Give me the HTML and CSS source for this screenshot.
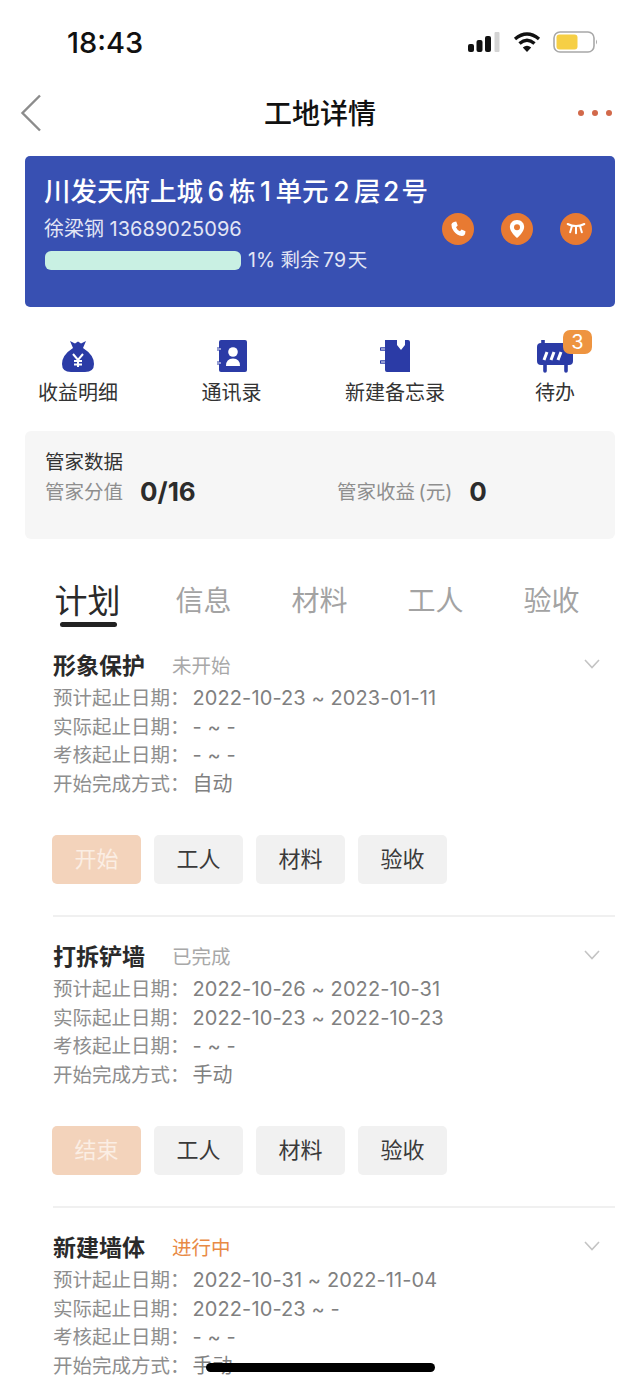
FILE: index.html
```html
<!DOCTYPE html>
<html lang="zh-CN">

<head>
    <meta charset="UTF-8">
    <meta name="viewport" content="width=device-width, initial-scale=1.0">
    <title>工地详情</title>
    <link rel="stylesheet" href="styles.css">
</head>

<body>
    <div class="phone">
        <!-- Status bar -->
        <div class="status-bar">
            <span class="time">18:43</span>
            <div class="status-icons">
                <svg width="33" height="20" viewBox="0 0 33 20">
                    <rect x="0" y="12" width="6" height="8" rx="2" fill="#111"/>
                    <rect x="8.5" y="8" width="6" height="12" rx="2" fill="#111"/>
                    <rect x="17" y="4" width="6" height="16" rx="2" fill="#111"/>
                    <rect x="26.5" y="0" width="5" height="20" rx="1" fill="#d4d4d4"/>
                </svg>
                <svg width="28" height="22" viewBox="0 0 28 22" fill="none" stroke="#111" stroke-width="3.4">
                    <path d="M2 8 Q14 -2 26 8"/>
                    <path d="M6.5 12.5 Q14 6 21.5 12.5"/>
                    <path d="M14 21 L9.8 16.5 Q14 13 18.2 16.5 Z" fill="#111" stroke="none"/>
                </svg>
                <svg width="46" height="22" viewBox="0 0 46 22">
                    <rect x="1" y="1" width="40" height="20" rx="6" fill="#fff" stroke="#a8a8a8" stroke-width="1.6"/>
                    <rect x="3.5" y="3.5" width="21" height="15" rx="3" fill="#f6cf45"/>
                    <path d="M43 8.5 Q45 11 43 13.5 Z" fill="#a8a8a8"/>
                </svg>
            </div>
        </div>

        <!-- Nav bar -->
        <div class="nav-bar">
            <svg class="back" width="22" height="38" viewBox="0 0 22 38" fill="none" stroke="#8c8c8c" stroke-width="2.4">
                <path d="M20 1.5 L2.5 19 L20 36.5"/>
            </svg>
            <h1 class="nav-title">工地详情</h1>
            <div class="more"><i></i><i></i><i></i></div>
        </div>

        <!-- Blue site card -->
        <div class="site-card">
            <h2 class="site-name">川发天府上城&thinsp;6&thinsp;栋&thinsp;1&thinsp;单元&thinsp;2&thinsp;层&hairsp;2&hairsp;号</h2>
            <div class="site-row">
                <div class="site-info">
                    <div class="site-owner">徐梁钢 13689025096</div>
                    <div class="site-progress">
                        <div class="bar"></div>
                        <span>1% 剩余&thinsp;79&hairsp;天</span>
                    </div>
                </div>
                <div class="site-actions">
                    <span class="round-btn">
                        <svg width="18" height="18" viewBox="0 0 24 24" fill="#fff"><path d="M6.6 2.5 L9.6 2 L11.6 7.4 L9.4 9.6 Q10.6 13 14.6 15 L16.8 12.8 L22 15 L21.4 18.6 Q20.4 21.4 17 21.2 Q10.4 20.4 6.4 15 Q3 10.2 3.2 6 Q3.6 3.2 6.6 2.5 Z"/></svg>
                    </span>
                    <span class="round-btn">
                        <svg width="18" height="20" viewBox="0 0 24 26"><path d="M12 1 C5.8 1 2.5 5.6 2.5 10.4 C2.5 16 8 21.4 12 25 C16 21.4 21.5 16 21.5 10.4 C21.5 5.6 18.2 1 12 1 Z" fill="#fff"/><circle cx="12" cy="10.5" r="4" fill="#e87a32"/></svg>
                    </span>
                    <span class="round-btn">
                        <svg width="20" height="16" viewBox="0 0 24 18" fill="none" stroke="#fff" stroke-width="2.4" stroke-linecap="round"><path d="M2 3 Q12 8 22 3"/><path d="M7 6 L5 13"/><path d="M12 7 L12 14"/><path d="M17 6 L19 13"/></svg>
                    </span>
                </div>
            </div>
        </div>

        <!-- Shortcuts -->
        <div class="shortcuts">
            <div class="shortcut">
                <svg width="32" height="36" viewBox="0 0 32 36">
                    <path d="M8 1 L13 3.5 L16 1.5 L19 3.5 L24 1 L21 8 Q32 15 32 24 Q32 32 23 32 L9 32 Q0 32 0 24 Q0 15 11 8 Z" fill="#2b3ba6"/>
                    <path d="M11 14 L16 20 L21 14 M16 20 L16 27 M12 21 L20 21 M12 24.5 L20 24.5" fill="none" stroke="#fff" stroke-width="2"/>
                </svg>
                <span>收益明细</span>
            </div>
            <div class="shortcut">
                <svg width="30" height="36" viewBox="0 0 30 36">
                    <rect x="2" y="0" width="28" height="32" rx="2" fill="#2b3ba6"/>
                    <path d="M0 9 H5 M0 23 H5" stroke="#2b3ba6" stroke-width="3" stroke-linecap="round"/>
                    <path d="M0 9 H4 M0 23 H4" stroke="#fff" stroke-width="1"/>
                    <circle cx="16" cy="12" r="4.8" fill="#fff"/>
                    <path d="M9 26 Q9 18.5 16 18.5 Q23 18.5 23 26 Z" fill="#fff"/>
                </svg>
                <span>通讯录</span>
            </div>
            <div class="shortcut">
                <svg width="30" height="36" viewBox="0 0 30 36">
                    <path d="M5 0 H17 V5 L21 10 L25 5 V0 H28 Q30 0 30 2 V32 H7 Q5 32 5 30 Z" fill="#2b3ba6"/>
                    <path d="M1 9 H7 M1 22 H7" stroke="#2b3ba6" stroke-width="3.4" stroke-linecap="round"/>
                    <path d="M1 9 H5 M1 22 H5" stroke="#fff" stroke-width="1"/>
                </svg>
                <span>新建备忘录</span>
            </div>
            <div class="shortcut">
                <svg width="36" height="36" viewBox="0 0 36 36">
                    <path d="M6 0 V4 M8 25 V31 M29 25 V31" stroke="#2b3ba6" stroke-width="3.6" stroke-linecap="round" fill="none"/>
                    <rect x="0" y="3" width="36" height="22" rx="4" fill="#2b3ba6"/>
                    <path d="M7 20 L10 12 M14 20 L17 12 M21 20 L24 12" stroke="#fff" stroke-width="3"/>
                </svg>
                <span>待办</span>
                <b class="badge">3</b>
            </div>
        </div>

        <!-- Butler data -->
        <div class="data-card">
            <div class="data-title">管家数据</div>
            <div class="data-row">
                <div class="data-cell"><span>管家分值</span><strong>0/16</strong></div>
                <div class="data-cell"><span>管家收益&thinsp;(元)</span><strong>0</strong></div>
            </div>
        </div>

        <!-- Tabs -->
        <div class="tabs">
            <div class="tab active">计划</div>
            <div class="tab">信息</div>
            <div class="tab">材料</div>
            <div class="tab">工人</div>
            <div class="tab">验收</div>
        </div>

        <!-- Plan list -->
        <div class="plan">
            <div class="plan-head">
                <h3>形象保护</h3>
                <span class="plan-status">未开始</span>
                <svg class="chevron" width="16" height="10" viewBox="0 0 16 10" fill="none" stroke="#c4c4c4" stroke-width="1.6"><path d="M1 1 L8 8.5 L15 1"/></svg>
            </div>
            <p>预计起止日期：<span>2022-10-23 ~ 2023-01-11</span></p>
            <p>实际起止日期：<span>- ~ -</span></p>
            <p>考核起止日期：<span>- ~ -</span></p>
            <p>开始完成方式：<span>自动</span></p>
            <div class="plan-btns">
                <span class="btn primary">开始</span>
                <span class="btn">工人</span>
                <span class="btn">材料</span>
                <span class="btn">验收</span>
            </div>
        </div>

        <div class="plan">
            <div class="plan-head">
                <h3>打拆铲墙</h3>
                <span class="plan-status">已完成</span>
                <svg class="chevron" width="16" height="10" viewBox="0 0 16 10" fill="none" stroke="#c4c4c4" stroke-width="1.6"><path d="M1 1 L8 8.5 L15 1"/></svg>
            </div>
            <p>预计起止日期：<span>2022-10-26 ~ 2022-10-31</span></p>
            <p>实际起止日期：<span>2022-10-23 ~ 2022-10-23</span></p>
            <p>考核起止日期：<span>- ~ -</span></p>
            <p>开始完成方式：<span>手动</span></p>
            <div class="plan-btns">
                <span class="btn primary">结束</span>
                <span class="btn">工人</span>
                <span class="btn">材料</span>
                <span class="btn">验收</span>
            </div>
        </div>

        <div class="plan last">
            <div class="plan-head">
                <h3>新建墙体</h3>
                <span class="plan-status doing">进行中</span>
                <svg class="chevron" width="16" height="10" viewBox="0 0 16 10" fill="none" stroke="#c4c4c4" stroke-width="1.6"><path d="M1 1 L8 8.5 L15 1"/></svg>
            </div>
            <p>预计起止日期：<span>2022-10-31 ~ 2022-11-04</span></p>
            <p>实际起止日期：<span>2022-10-23 ~ -</span></p>
            <p>考核起止日期：<span>- ~ -</span></p>
            <p>开始完成方式：<span>手动</span></p>
        </div>

        <!-- Home indicator -->
        <div class="home-bar"></div>
    </div>
</body>

</html>
```
FILE: styles.css
```css
/* Page */
html,
body {
    margin: 0;
    padding: 0;
    background: #fff;
}

body {
    font-family: "Inter", "Noto Sans CJK SC", sans-serif;
    color: #222;
}

.phone {
    position: relative;
    width: 640px;
    height: 1385px;
    overflow: hidden;
}

/* Status bar */
.status-bar {
    display: flex;
    justify-content: space-between;
    align-items: center;
    height: 30px;
    padding: 27px 41px 0 67px;
}

.time {
    font-size: 29px;
    font-weight: 500;
    color: #111;
}

.status-icons {
    display: flex;
    align-items: center;
    gap: 12px;
}

/* Nav bar */
.nav-bar {
    display: flex;
    align-items: center;
    justify-content: center;
    position: relative;
    height: 40px;
    margin-top: 35px;
}

.back {
    position: absolute;
    left: 20px;
    top: 2px;
}

.nav-title {
    margin: 0;
    font-size: 28px;
    font-weight: 500;
    color: #111;
}

.more {
    position: absolute;
    right: 28px;
    top: 18px;
    display: flex;
    gap: 8px;
}

.more i {
    width: 6px;
    height: 6px;
    border-radius: 50%;
    background: #d2694a;
}

/* Blue site card */
.site-card {
    box-sizing: border-box;
    height: 151px;
    margin: 24px 25px 0;
    padding: 16px 20px 0 19px;
    background: #3850b2;
    border-radius: 5px;
    color: #fff;
}

.site-name {
    margin: 0;
    font-size: 26.5px;
    line-height: 38px;
    font-weight: 500;
    white-space: nowrap;
}

.site-row {
    display: flex;
    justify-content: space-between;
    align-items: flex-start;
}

.site-owner {
    margin-top: 5px;
    font-size: 20px;
    line-height: 28px;
    color: #e3e6f5;
}

.site-progress {
    display: flex;
    align-items: center;
    gap: 7px;
    margin-top: 3px;
    font-size: 19.5px;
    line-height: 28px;
    color: #e3e6f5;
}

.bar {
    width: 196px;
    height: 19px;
    margin-left: 1px;
    border-radius: 6px;
    background: #c9f0e3;
}

.site-actions {
    display: flex;
    gap: 27px;
    margin-top: 3px;
    margin-right: 3px;
}

.round-btn {
    display: flex;
    align-items: center;
    justify-content: center;
    width: 32px;
    height: 32px;
    border-radius: 50%;
    background: #e87a32;
}

/* Shortcuts */
.shortcuts {
    display: grid;
    grid-template-columns: 154px 153px 174px 146px;
    height: 80px;
    margin-top: 33px;
    padding-left: 1px;
}

.shortcut {
    position: relative;
    display: flex;
    flex-direction: column;
    align-items: center;
    font-size: 20px;
    line-height: 28px;
    color: #333;
    white-space: nowrap;
}

.shortcut svg {
    height: 36px;
    margin-bottom: 3px;
}

.badge {
    position: absolute;
    left: calc(50% + 8px);
    top: -10px;
    width: 29px;
    height: 24px;
    border-radius: 7px;
    background: #ee9440;
    color: #fff;
    font-size: 20px;
    font-weight: 400;
    line-height: 24px;
    text-align: center;
}

/* Butler data */
.data-card {
    box-sizing: border-box;
    height: 108px;
    margin: 11px 25px 0;
    padding: 17px 20px 0;
    background: #f6f6f6;
    border-radius: 6px;
}

.data-title {
    font-size: 19.5px;
    line-height: 28px;
    color: #333;
}

.data-row {
    display: flex;
    align-items: center;
    margin-top: 2px;
}

.data-cell {
    display: flex;
    flex: none;
    align-items: center;
    gap: 17px;
    width: 292px;
}

.data-cell span {
    font-size: 19.5px;
    line-height: 28px;
    color: #8e8e8e;
}

.data-cell strong {
    font-size: 26px;
    line-height: 28px;
    color: #2c2c2c;
}

/* Tabs */
.tabs {
    display: flex;
    height: 70px;
    margin-top: 39px;
    padding-left: 29.5px;
}

.tab {
    position: relative;
    width: 116px;
    text-align: center;
    font-size: 28px;
    line-height: 46px;
    color: #a3a3a3;
}

.tab.active {
    font-size: 33px;
    color: #2a2a2a;
}

.tab.active::after {
    content: "";
    position: absolute;
    left: 30px;
    top: 44px;
    width: 57px;
    height: 5px;
    border-radius: 3px;
    background: #222;
}

/* Plan list */
.plan {
    margin: 0 25px 22px 53px;
    padding-bottom: 31px;
    border-bottom: 2px solid #f0f0f0;
}

.plan.last {
    border-bottom: none;
}

.plan-head {
    display: flex;
    align-items: center;
    height: 32px;
    margin-bottom: 4px;
}

.plan-head h3 {
    margin: 0;
    font-size: 23px;
    font-weight: 700;
    color: #2a2a2a;
}

.plan-status {
    margin-left: 27px;
    font-size: 19.5px;
    color: #a8a8a8;
}

.plan-status.doing {
    color: #e88a45;
}

.chevron {
    margin-left: auto;
    margin-right: 15px;
}

.plan p {
    height: 28.5px;
    margin: 0;
    font-size: 19.5px;
    line-height: 28.5px;
    color: #8e8e8e;
    white-space: nowrap;
}

.plan p span {
    margin-left: 3px;
    font-size: 20px;
    letter-spacing: 0.1px;
    color: #808080;
}

.plan-btns {
    display: flex;
    gap: 13px;
    margin-top: 37px;
    margin-left: -1px;
}

.btn {
    width: 89px;
    height: 49px;
    border-radius: 5px;
    background: #f1f1f1;
    text-align: center;
    font-size: 22px;
    line-height: 49px;
    color: #3a3a3a;
}

.btn.primary {
    background: #f3d3bb;
    color: #fbeee4;
}

/* Home indicator */
.home-bar {
    position: absolute;
    left: 206px;
    top: 1363px;
    width: 229px;
    height: 9px;
    border-radius: 5px;
    background: #000;
}
```
